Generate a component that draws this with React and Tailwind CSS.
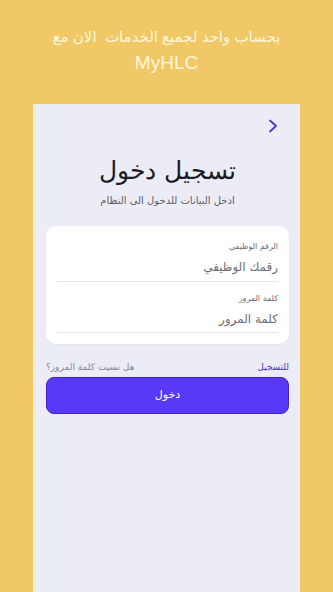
/**
 * Login screen - app store preview
 */

export default function App() {
  return (
    <div
      className="min-h-[592px] h-[592px] bg-[#F0C865] flex flex-col overflow-hidden"
      style={{ fontFamily: '"DejaVu Sans", "Noto Sans", sans-serif' }}
    >
      {/* Header text */}
      <div className="pt-[27px] text-center text-[#FFF6DC]">
        <p dir="rtl" className="text-[15px] leading-[20px]" style={{ fontFamily: '"Liberation Sans", "DejaVu Sans", sans-serif' }}>
          بحساب واحد لجميع الخدمات&nbsp; الان مع
        </p>
        <p className="text-[19px] leading-[24px] mt-[4px]" style={{ fontFamily: '"Liberation Sans", sans-serif' }}>
          MyHLC
        </p>
      </div>

      {/* Phone panel */}
      <div className="mt-[29px] mx-[33px] flex-1 bg-[#ECECF6] border-l-2 border-[#F6E9D6] flex flex-col px-[11px]">
        <div className="flex justify-end pt-[15px] pr-[11px]">
          <svg width="10" height="14" viewBox="0 0 10 14" fill="none">
            <path d="M2 1.5 L8 7 L2 12.5" stroke="#4A36D6" strokeWidth="1.8" strokeLinecap="round" strokeLinejoin="round" />
          </svg>
        </div>

        <h1 dir="rtl" className="text-center text-[25px] leading-[32px] font-light text-[#1b1b24] mt-[22px]">
          تسجيل دخول
        </h1>
        <p dir="rtl" className="text-center text-[10px] text-[#5d5d66] mt-[6px]">
          ادخل البيانات للدخول الى النظام
        </p>

        {/* Form card */}
        <div dir="rtl" className="mt-[18px] bg-white rounded-[10px] px-[11px] pt-[15px] pb-[11px] shadow-[0_1px_2px_rgba(0,0,0,0.04)]">
          <label className="block text-[8px] text-[#6b6b73]">الرقم الوظيفي</label>
          <div className="text-[12px] text-[#6d6d74] mt-[5px] pb-[5px] border-b border-[#e3e3ea]">رقمك الوظيفي</div>
          <label className="block text-[8px] text-[#6b6b73] mt-[11px]">كلمة المرور</label>
          <div className="text-[12px] text-[#6d6d74] mt-[5px] pb-[4px] border-b border-[#e3e3ea]">كلمة المرور</div>
        </div>

        <div dir="rtl" className="flex justify-between items-center mt-[17px] text-[9px]">
          <span className="text-[#4A36D6]">للتسجيل</span>
          <span className="text-[#8a8a92]">هل نسيت كلمة المرور؟</span>
        </div>

        <button className="mt-[2px] h-[37px] w-full rounded-[8px] bg-[#5A38F8] border border-[#3f22c8] text-white text-[11px]">
          دخول
        </button>
      </div>
    </div>
  );
}
